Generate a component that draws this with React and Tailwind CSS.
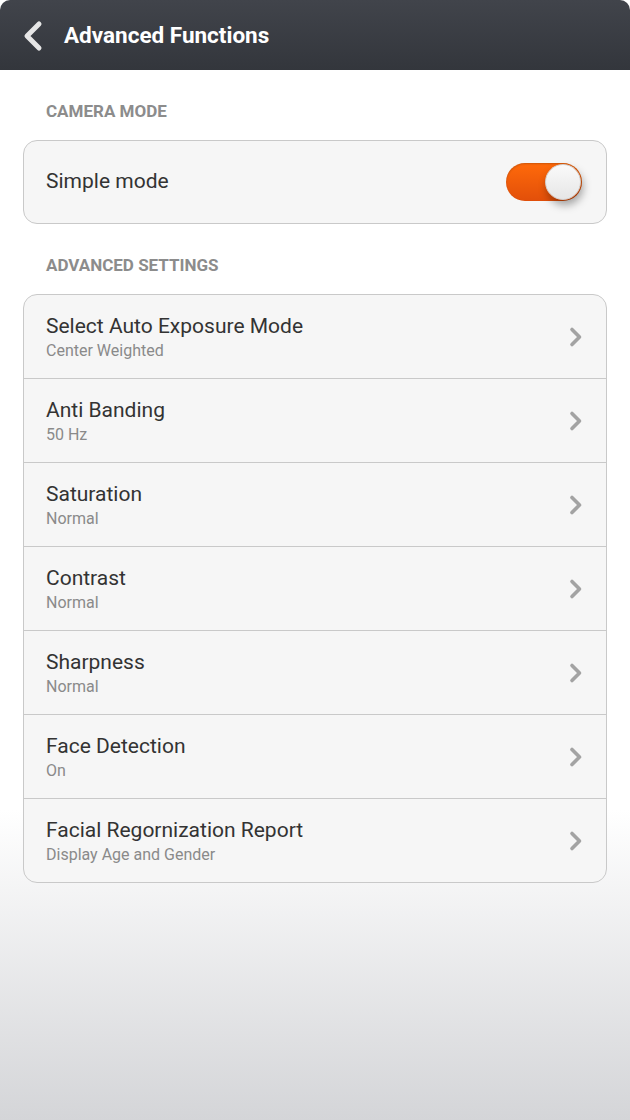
import React from 'react';

const settings = [
  { title: 'Select Auto Exposure Mode', value: 'Center Weighted' },
  { title: 'Anti Banding', value: '50 Hz' },
  { title: 'Saturation', value: 'Normal' },
  { title: 'Contrast', value: 'Normal' },
  { title: 'Sharpness', value: 'Normal' },
  { title: 'Face Detection', value: 'On' },
  { title: 'Facial Regornization Report', value: 'Display Age and Gender' },
];

const Chevron = () => (
  <svg width="16" height="22" viewBox="0 0 16 22" className="shrink-0">
    <path d="M4 3.5 L11.5 11 L4 18.5" fill="none" stroke="#a3a3a3" strokeWidth="3.6" strokeLinecap="round" strokeLinejoin="round" />
  </svg>
);

export default function App() {
  return (
    <div
      className="w-[630px] h-[1120px] flex flex-col overflow-hidden bg-[linear-gradient(to_bottom,#ffffff_0px,#ffffff_810px,#d4d5d8_1120px)]"
      style={{ fontFamily: 'Roboto, "Noto Sans", sans-serif' }}
    >
      <div className="h-[70px] shrink-0 rounded-t-[10px] bg-[linear-gradient(to_bottom,#41444b,#33363c)] flex items-center pt-[2px]">
        <svg width="24" height="32" viewBox="0 0 24 32" className="ml-[21px]">
          <path d="M18 4 L6 16 L18 28" fill="none" stroke="#e6e6e6" strokeWidth="5" strokeLinecap="round" strokeLinejoin="round" />
        </svg>
        <span className="ml-[19px] text-white text-[22.5px] font-bold">Advanced Functions</span>
      </div>

      <div className="h-[70px] flex items-end pb-[16px] px-[46px] text-[17px] font-bold text-[#8c8c8c]">CAMERA MODE</div>

      <div className="mx-[23px] h-[84px] rounded-[14px] border border-[#c9c9c9] bg-[#f6f6f6] flex items-center justify-between pl-[22px] pr-[24px]">
        <span className="text-[21px] text-[#333333]">Simple mode</span>
        <div className="relative w-[76px] h-[38px] rounded-full bg-[linear-gradient(to_bottom,#ff6a0a,#e24f0a)] shadow-[inset_0_1px_2px_rgba(0,0,0,0.2)]">
          <div className="absolute right-[1px] top-[1px] w-[36px] h-[36px] rounded-full bg-[linear-gradient(to_bottom,#fafafa,#e6e6e6)] border border-[#d0d0d0] shadow-[2px_5px_8px_rgba(0,0,0,0.35)]" />
        </div>
      </div>

      <div className="h-[70px] flex items-end pb-[16px] px-[46px] text-[17px] font-bold text-[#8c8c8c]">ADVANCED SETTINGS</div>

      <div className="mx-[23px] rounded-[14px] border border-[#c9c9c9] bg-[#f6f6f6] overflow-hidden">
        {settings.map((s, i) => (
          <div
            key={s.title}
            className={`flex items-center justify-between pl-[22px] pr-[22px] ${i > 0 ? 'h-[84px] border-t border-[#c9c9c9]' : 'h-[83px]'}`}
          >
            <div className="flex flex-col">
              <span className="text-[21px] leading-[26px] text-[#333333]">{s.title}</span>
              <span className="text-[16px] leading-[20px] text-[#8a8a8a] mt-[2px]">{s.value}</span>
            </div>
            <Chevron />
          </div>
        ))}
      </div>
    </div>
  );
}
